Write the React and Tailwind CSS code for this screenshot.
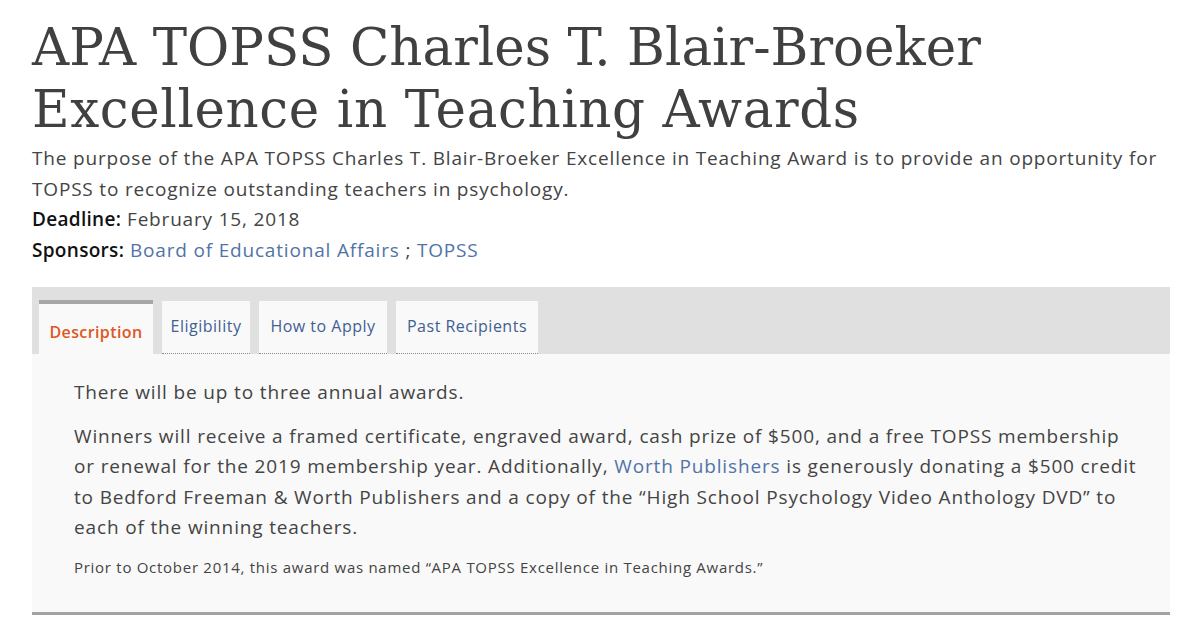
import React from "react";

const tabs = [
  { label: "Description", w: "w-[114px]" },
  { label: "Eligibility", w: "w-[88px]" },
  { label: "How to Apply", w: "w-[128px]" },
  { label: "Past Recipients", w: "w-[142px]" },
];

export default function App() {
  return (
    <div className="w-[1200px] h-[630px] overflow-hidden bg-white text-[#444444]">
      <div className="px-8 pt-[16px]">
        <h1 className="font-['DejaVu_Serif',serif] text-[51.5px] leading-[62px] text-[#404040] whitespace-nowrap">
          APA TOPSS Charles T. Blair-Broeker
          <br />
          <span className="tracking-[0.6px]">Excellence in Teaching Awards</span>
        </h1>
        <div className="font-['Open_Sans',sans-serif] text-[19px] tracking-[0.82px] leading-[30.5px] mt-[3px] whitespace-nowrap">
          <p>
            The purpose of the APA TOPSS Charles T. Blair-Broeker Excellence in Teaching Award is to provide an opportunity for
            <br />
            TOPSS to recognize outstanding teachers in psychology.
          </p>
          <p>
            <span className="font-semibold text-[#111] tracking-[0.3px]">Deadline:</span> February 15, 2018
          </p>
          <p>
            <span className="font-semibold text-[#111] tracking-[0.3px]">Sponsors:</span>{" "}
            <a className="text-[#5273a6]">Board of Educational Affairs</a> ;{" "}
            <a className="text-[#5273a6]">TOPSS</a>
          </p>
        </div>

        <div className="mt-[22px] w-[1138px] font-['Open_Sans',sans-serif]">
          <div className="bg-[#e0e0e0] h-[67px] flex items-end gap-[9px] px-[7px]">
            {tabs.map((t, i) =>
              i === 0 ? (
                <div
                  key={t.label}
                  className={`${t.w} h-[54px] bg-[#f9f9f9] border-t-4 border-[#a6a6a6] flex items-center justify-center pt-[6px] text-[16px] tracking-[0.4px] font-semibold text-[#e0561c]`}
                >
                  {t.label}
                </div>
              ) : (
                <div
                  key={t.label}
                  className={`${t.w} h-[53px] bg-[#f9f9f9] border-b border-dotted border-[#888] flex items-center justify-center pb-[2px] text-[16px] tracking-[0.5px] text-[#3f5f92]`}
                >
                  {t.label}
                </div>
              )
            )}
          </div>
          <div className="bg-[#f9f9f9] border-b-[3px] border-[#a3a3a3] pl-[42px] pr-[20px] pt-[23px] pb-[33px] text-[19px] tracking-[0.85px] leading-[30.5px] whitespace-nowrap">
            <p>There will be up to three annual awards.</p>
            <p className="mt-[13px]">
              Winners will receive a framed certificate, engraved award, cash prize of $500, and a free TOPSS membership
              <br />
              or renewal for the 2019 membership year. Additionally,{" "}
              <a className="text-[#5273a6]">Worth Publishers</a> is generously donating a $500 credit
              <br />
              to Bedford Freeman &amp; Worth Publishers and a copy of the “High School Psychology Video Anthology DVD” to
              <br />
              each of the winning teachers.
            </p>
            <p className="mt-[12px] text-[15px] tracking-[0.72px] leading-[24px]">
              Prior to October 2014, this award was named “APA TOPSS Excellence in Teaching Awards.”
            </p>
          </div>
        </div>
      </div>
    </div>
  );
}
